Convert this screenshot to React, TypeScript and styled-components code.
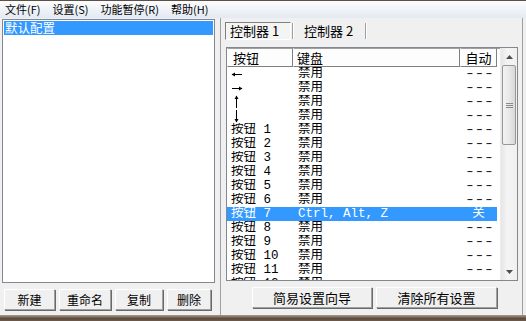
import React from "react";
import styled, { createGlobalStyle } from "styled-components";

const GlobalStyle = createGlobalStyle`
  html, body {
    margin: 0;
    padding: 0;
  }
  body {
    width: 526px;
    height: 321px;
    overflow: hidden;
    background: #f0f0f0;
    font-family: "Noto Sans CJK SC", sans-serif;
    color: #000;
  }
  * {
    box-sizing: border-box;
  }
`;

const Window = styled.div`
  width: 526px;
  height: 321px;
  display: flex;
  flex-direction: column;
  background: #f0f0f0;
  border-top: 1px solid #5e5044;
`;

const MenuBar = styled.div`
  height: 17px;
  flex: none;
  display: flex;
  align-items: center;
  background: linear-gradient(#fcfdfe, #e3e9f2);
  font-size: 11px;
  line-height: 17px;
`;

const MenuItem = styled.span`
  padding: 0 6px 0 5px;
  margin-right: 1px;
`;

const Main = styled.div`
  flex: 1;
  display: flex;
  min-height: 0;
`;

const LeftPane = styled.div`
  width: 216px;
  flex: none;
  display: flex;
  flex-direction: column;
  padding: 1px 1px 5px 2px;
`;

const ListBox = styled.div`
  flex: 1;
  background: #fff;
  border: 1px solid #828790;
  padding: 1px 0 0 0;
`;

const ListItem = styled.div<{ $selected?: boolean }>`
  height: 14px;
  line-height: 14px;
  margin: 0 1px;
  padding-left: 1px;
  font-size: 12.5px;
  background: ${(p) => (p.$selected ? "#3399ff" : "transparent")};
  color: ${(p) => (p.$selected ? "#fff" : "#000")};
`;

const ButtonRow = styled.div<{ $pad: number; $top: number }>`
  display: flex;
  gap: 4px;
  height: 21px;
  flex: none;
  margin-top: ${(p) => p.$top}px;
  padding-left: ${(p) => p.$pad}px;
`;

const Button = styled.button<{ $w: number; $size: number }>`
  width: ${(p) => p.$w}px;
  height: 21px;
  padding: 0;
  margin: 0;
  background: #f0f0f0;
  font-family: "Noto Sans CJK SC", sans-serif;
  font-size: ${(p) => p.$size}px;
  color: #000;
  border-top: 1px solid #fff;
  border-left: 1px solid #fff;
  border-right: 1px solid #a0a0a0;
  border-bottom: 1px solid #a0a0a0;
  box-shadow: 1px 1px 0 #696969;
  line-height: 19px;
`;

const Splitter = styled.div`
  width: 4px;
  flex: none;
`;

const RightPane = styled.div`
  width: 303px;
  flex: none;
  display: flex;
  flex-direction: column;
  border-left: 1px solid #a0a0a0;
  border-right: 1px solid #a0a0a0;
  padding: 4px 3px 7px 4px;
`;

const TabStrip = styled.div`
  display: flex;
  height: 18px;
  flex: none;
`;

const Tab = styled.div<{ $active?: boolean; $w: number }>`
  width: ${(p) => p.$w}px;
  height: 18px;
  font-size: 13px;
  line-height: 16px;
  padding-left: ${(p) => (p.$active ? 4 : 7)}px;
  border-top: 1px solid ${(p) => (p.$active ? "#808080" : "transparent")};
  border-left: 1px solid ${(p) => (p.$active ? "#808080" : "transparent")};
  border-bottom: 1px solid ${(p) => (p.$active ? "#fff" : "transparent")};
  border-right: 1px solid ${(p) => (p.$active ? "#fff" : "transparent")};
  background: ${(p) => (p.$active ? "#f4f4f4" : "transparent")};
`;

const TabSeparator = styled.div`
  width: 2px;
  height: 16px;
  margin: 1px 2px 0 1px;
  border-left: 1px solid #a0a0a0;
  border-right: 1px solid #fff;
`;

const ListView = styled.div`
  flex: 1;
  display: flex;
  margin: 7px 0 0 1px;
  width: 292px;
  border: 1px solid #828790;
  background: #fff;
  overflow: hidden;
  min-height: 0;
`;

const ListContent = styled.div`
  flex: 1;
  display: flex;
  flex-direction: column;
  overflow: hidden;
`;

const Header = styled.div`
  display: flex;
  height: 19px;
  flex: none;
  background: #fdfdfd;
`;

const HeaderCell = styled.div<{ $w: number; $center?: boolean; $pad?: number }>`
  width: ${(p) => p.$w}px;
  flex: none;
  height: 19px;
  font-size: 13px;
  line-height: 17px;
  padding-left: ${(p) => p.$pad ?? 0}px;
  text-align: ${(p) => (p.$center ? "center" : "left")};
  border-top: 1px solid #a0a0a0;
  border-left: 1px solid #fff;
  border-right: 1px solid #808080;
  border-bottom: 1px solid #808080;
`;

const HeaderFill = styled.div`
  flex: 1;
  border-top: 1px solid #a0a0a0;
`;

const Row = styled.div<{ $selected?: boolean }>`
  display: grid;
  grid-template-columns: 66px 167px 37px;
  width: 270px;
  height: 14px;
  flex: none;
  line-height: 14px;
  font-family: "Liberation Mono", "Noto Sans CJK SC", monospace;
  font-size: 12.5px;
  white-space: pre;
  background: ${(p) => (p.$selected ? "#3399ff" : "transparent")};
  color: ${(p) => (p.$selected ? "#fff" : "#000")};
`;

const Cell = styled.div<{ $pad?: number; $center?: boolean }>`
  padding-left: ${(p) => p.$pad ?? 0}px;
  overflow: hidden;
  display: flex;
  align-items: center;
  justify-content: ${(p) => (p.$center ? "center" : "flex-start")};
`;

const Dashes = styled.span`
  display: inline-block;
  letter-spacing: -1px;
  transform: scaleX(1.45);
  color: #222;
`;

const ScrollBar = styled.div`
  width: 17px;
  flex: none;
  display: flex;
  flex-direction: column;
  background: linear-gradient(90deg, #e6e6e6, #f4f4f4 40%, #f0f0f0);
  border-left: 1px solid #ececec;
`;

const ScrollArrow = styled.div`
  height: 17px;
  flex: none;
  display: flex;
  align-items: center;
  justify-content: center;
`;

const ScrollTrack = styled.div`
  flex: 1;
  padding: 0 1px;
`;

const Thumb = styled.div`
  height: 80px;
  border: 1px solid #979797;
  border-radius: 2px;
  background: linear-gradient(90deg, #f3f3f3, #e8e8e8 50%, #d8d8d8);
  display: flex;
  align-items: center;
  justify-content: center;
`;

const BottomFrame = styled.div`
  height: 6px;
  flex: none;
  background: linear-gradient(#a89c8e, #5a4a3d 60%, #6e5d4e);
`;

type Dir = "left" | "right" | "up" | "down";

const Arrow = ({ dir }: { dir: Dir }) => {
  if (dir === "left" || dir === "right") {
    return (
      <svg width="13" height="14" viewBox="0 0 13 14">
        <line x1="2" y1="7.5" x2="12" y2="7.5" stroke="#000" strokeWidth="1" />
        {dir === "left" ? (
          <path d="M1.5 7.5 L5 5.5 L5 9.5 Z" fill="#000" />
        ) : (
          <path d="M12.5 7.5 L9 5.5 L9 9.5 Z" fill="#000" />
        )}
      </svg>
    );
  }
  return (
    <svg width="13" height="14" viewBox="0 0 13 14">
      <line x1="6.5" y1="1" x2="6.5" y2="13" stroke="#000" strokeWidth="1" />
      {dir === "up" ? (
        <path d="M6.5 0.5 L4.5 4 L8.5 4 Z" fill="#000" />
      ) : (
        <path d="M6.5 13.5 L4.5 10 L8.5 10 Z" fill="#000" />
      )}
    </svg>
  );
};

const Triangle = ({ up }: { up?: boolean }) => (
  <svg width="7" height="4" viewBox="0 0 7 4">
    <path d={up ? "M3.5 0 L7 4 L0 4 Z" : "M0 0 L7 0 L3.5 4 Z"} fill="#4d4d4d" />
  </svg>
);

const Grip = () => (
  <svg width="7" height="7" viewBox="0 0 7 7">
    <line x1="0" y1="1.5" x2="7" y2="1.5" stroke="#8a8a8a" />
    <line x1="0" y1="3.5" x2="7" y2="3.5" stroke="#8a8a8a" />
    <line x1="0" y1="5.5" x2="7" y2="5.5" stroke="#8a8a8a" />
  </svg>
);

type RowData = { label: string; arrow?: Dir; key: string; auto: string; selected?: boolean };

const rows: RowData[] = [
  { label: "", arrow: "left", key: "禁用", auto: "---" },
  { label: "", arrow: "right", key: "禁用", auto: "---" },
  { label: "", arrow: "up", key: "禁用", auto: "---" },
  { label: "", arrow: "down", key: "禁用", auto: "---" },
  ...Array.from({ length: 12 }, (_, i) => ({
    label: `按钮 ${i + 1}`,
    key: i === 6 ? "Ctrl, Alt, Z" : "禁用",
    auto: i === 6 ? "关" : "---",
    selected: i === 6,
  })),
];

export default function App() {
  return (
    <>
      <GlobalStyle />
      <Window>
        <MenuBar>
          <MenuItem>文件(F)</MenuItem>
          <MenuItem>设置(S)</MenuItem>
          <MenuItem>功能暂停(R)</MenuItem>
          <MenuItem>帮助(H)</MenuItem>
        </MenuBar>
        <Main>
          <LeftPane>
            <ListBox>
              <ListItem $selected>默认配置</ListItem>
            </ListBox>
            <ButtonRow $pad={2} $top={6}>
              <Button $w={51} $size={12}>新建</Button>
              <Button $w={52} $size={12}>重命名</Button>
              <Button $w={48} $size={12}>复制</Button>
              <Button $w={44} $size={12}>删除</Button>
            </ButtonRow>
          </LeftPane>
          <Splitter />
          <RightPane>
            <TabStrip>
              <Tab $active $w={66}>控制器 1</Tab>
              <TabSeparator />
              <Tab $w={68}>控制器 2</Tab>
              <TabSeparator />
            </TabStrip>
            <ListView>
              <ListContent>
                <Header>
                  <HeaderCell $w={66} $pad={5}>按钮</HeaderCell>
                  <HeaderCell $w={167} $pad={3}>键盘</HeaderCell>
                  <HeaderCell $w={37} $center>自动</HeaderCell>
                  <HeaderFill />
                </Header>
                {rows.map((r, i) => (
                  <Row key={i} $selected={r.selected}>
                    <Cell $pad={r.arrow ? 3 : 4}>{r.arrow ? <Arrow dir={r.arrow} /> : r.label}</Cell>
                    <Cell $pad={5}>{r.key}</Cell>
                    <Cell $center>{r.auto === "---" ? <Dashes>---</Dashes> : r.auto}</Cell>
                  </Row>
                ))}
              </ListContent>
              <ScrollBar>
                <ScrollArrow>
                  <Triangle up />
                </ScrollArrow>
                <ScrollTrack>
                  <Thumb>
                    <Grip />
                  </Thumb>
                </ScrollTrack>
                <ScrollArrow>
                  <Triangle />
                </ScrollArrow>
              </ScrollBar>
            </ListView>
            <ButtonRow $pad={27} $top={6}>
              <Button $w={120} $size={13}>简易设置向导</Button>
              <Button $w={121} $size={13}>清除所有设置</Button>
            </ButtonRow>
          </RightPane>
        </Main>
        <BottomFrame />
      </Window>
    </>
  );
}
